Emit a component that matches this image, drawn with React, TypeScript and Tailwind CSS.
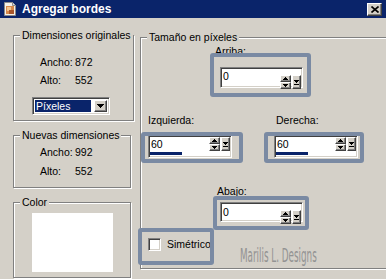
import React from "react";

const raised =
  "bg-[#d4d0c8] border border-t-white border-l-white border-b-[#404040] border-r-[#404040] shadow-[inset_-1px_-1px_0_#808080]";
const sunken =
  "border border-t-[#808080] border-l-[#808080] border-b-white border-r-white shadow-[inset_1px_1px_0_#404040,inset_-1px_-1px_0_#d4d0c8]";

function Arrow({ dir }: { dir: "up" | "down" }) {
  return (
    <svg width="5" height="3" viewBox="0 0 5 3" className="block" shapeRendering="crispEdges">
      {dir === "up" ? (
        <>
          <rect x="2" y="0" width="1" height="1" fill="#000" />
          <rect x="1" y="1" width="3" height="1" fill="#000" />
          <rect x="0" y="2" width="5" height="1" fill="#000" />
        </>
      ) : (
        <>
          <rect x="0" y="0" width="5" height="1" fill="#000" />
          <rect x="1" y="1" width="3" height="1" fill="#000" />
          <rect x="2" y="2" width="1" height="1" fill="#000" />
        </>
      )}
    </svg>
  );
}

function SpinButtons({ className }: { className: string }) {
  return (
    <div className={`flex gap-[1px] ${className}`}>
      <div className="flex flex-col">
        <div className={`${raised} w-[11px] h-[7px] flex items-center justify-center`}>
          <Arrow dir="up" />
        </div>
        <div className={`${raised} w-[11px] h-[7px] flex items-center justify-center`}>
          <Arrow dir="down" />
        </div>
      </div>
      <div className={`${raised} w-[9px] h-[14px] flex flex-col items-center justify-center gap-[1px]`}>
        <Arrow dir="down" />
        <div className="w-[5px] h-px bg-black" />
      </div>
    </div>
  );
}

function Spin({
  size,
  value,
  bar,
  btn,
  textPad,
  highlight,
}: {
  size: string;
  value: string;
  bar: number;
  btn: string;
  textPad: string;
  highlight: string;
}) {
  return (
    <div className={`relative ${size}`}>
      <div className={`w-full h-full bg-white ${sunken} flex flex-col`}>
        <div className="flex items-start">
          <div className={`flex-1 pl-[2px] leading-[13px] ${textPad}`}>{value}</div>
          <SpinButtons className={btn} />
        </div>
        <div className="mt-auto mb-[2px] ml-[1px] h-[3px] bg-[#0a246a]" style={{ width: bar }} />
      </div>
      <div className={`absolute pointer-events-none border-[4px] border-[#7a8aa3] rounded-[3px] ${highlight}`} />
    </div>
  );
}

function Group({
  title,
  className,
  children,
}: {
  title: string;
  className: string;
  children?: React.ReactNode;
}) {
  return (
    <fieldset
      className={`border border-[#808080] shadow-[inset_1px_1px_0_#fff,1px_1px_0_#fff] ${className}`}
    >
      <legend className="ml-[6px] px-[2px] leading-[13px] bg-[#d4d0c8] whitespace-nowrap">{title}</legend>
      {children}
    </fieldset>
  );
}

function Row({ label, value, h }: { label: string; value: string; h: string }) {
  return (
    <div className={`flex items-center ${h}`}>
      <span className="w-[35px] whitespace-nowrap">{label}</span>
      <span>{value}</span>
    </div>
  );
}

export default function App() {
  return (
    <div className="w-[386px] h-[279px] bg-[#d4d0c8] overflow-hidden flex flex-col font-['Liberation_Sans',Arial,sans-serif] text-[10.5px] leading-[13px] text-black">
      {/* Title bar */}
      <div className="h-[18px] bg-[#0a246a] flex items-center shrink-0">
        <svg width="14" height="14" viewBox="0 0 14 14" className="ml-[3px] shrink-0">
          <path d="M1.5 0.5 H9.5 L12.5 3.5 V13.5 H1.5 Z" fill="#f4f1ea" stroke="#8a8a8a" />
          <path d="M9.5 0.5 V3.5 H12.5" fill="#dcdcdc" stroke="#8a8a8a" />
          <rect x="3" y="4" width="8" height="8" fill="#d88a4c" />
          <rect x="4" y="5" width="4" height="4" fill="#f1c38e" />
          <rect x="6" y="8" width="5" height="4" fill="#a8552a" />
        </svg>
        <span className="ml-[5px] text-white font-bold text-[12px] leading-[14px] whitespace-nowrap">
          Agregar bordes
        </span>
        <div className={`ml-auto mr-[4px] w-[15px] h-[13px] ${raised} flex items-center justify-center`}>
          <svg width="8" height="7" viewBox="0 0 8 7">
            <path d="M0.5 0.5 L7.5 6.5 M7.5 0.5 L0.5 6.5" stroke="#000" strokeWidth="1.6" />
          </svg>
        </div>
      </div>

      {/* Body */}
      <div className="flex items-start flex-1">
        {/* Left column */}
        <div className="ml-[13px] mt-[11px] w-[118px] flex flex-col">
          <Group title="Dimensiones originales" className="h-[92px]">
            <div className="pt-[11px] pl-[26px]">
              <Row label="Ancho:" value="872" h="h-[18px]" />
              <Row label="Alto:" value="552" h="h-[18px]" />
            </div>
            <div
              className={`ml-[18px] mt-[8px] w-[78px] h-[18px] bg-white ${sunken} flex items-stretch p-[2px]`}
            >
              <div className="flex-1 mr-[3px] bg-[#0a246a] text-white pl-[1px] leading-[12px] flex items-center">
                Píxeles
              </div>
              <div className={`${raised} w-[13px] flex items-center justify-center`}>
                <svg width="7" height="4" viewBox="0 0 7 4" shapeRendering="crispEdges">
                  <rect x="0" y="0" width="7" height="1" fill="#000" />
                  <rect x="1" y="1" width="5" height="1" fill="#000" />
                  <rect x="2" y="2" width="3" height="1" fill="#000" />
                  <rect x="3" y="3" width="1" height="1" fill="#000" />
                </svg>
              </div>
            </div>
          </Group>

          <Group title="Nuevas dimensiones" className="mt-[8px] h-[59px]">
            <div className="pt-[1px] pl-[26px]">
              <Row label="Ancho:" value="992" h="h-[19px]" />
              <Row label="Alto:" value="552" h="h-[19px]" />
            </div>
          </Group>

          <Group title="Color" className="mt-[8px] h-[82px]">
            <div className="ml-[18px] mt-[4px] w-[81px] h-[59px] bg-white" />
          </Group>
        </div>

        {/* Right group */}
        <Group title="Tamaño en píxeles" className="ml-[9px] mt-[13px] w-[237px] h-[238px]">
          {/* Arriba */}
          <div className="ml-[74px] mt-[1px] flex flex-col items-start">
            <span>Arriba:</span>
            <div className="ml-[5px] mt-[9px]">
              <Spin
                size="w-[83px] h-[21px]"
                value="0"
                bar={0}
                btn="mt-[7px] mr-[1px]"
                textPad="pt-[2px]"
                highlight="left-[-10px] top-[-14px] right-[-8px] bottom-[-9px]"
              />
            </div>
          </div>

          {/* Izquierda / Derecha */}
          <div className="flex mt-[26px]">
            <div className="ml-[7px] flex flex-col items-start">
              <span>Izquierda:</span>
              <div className="mt-[8px]">
                <Spin
                  size="w-[84px] h-[23px]"
                  value="60"
                  bar={32}
                  btn="mt-[1px] mr-[1px]"
                  textPad="pt-[2px]"
                  highlight="left-[-7px] top-[-3px] right-[-11px] bottom-[-5px]"
                />
              </div>
            </div>
            <div className="ml-[42px] flex flex-col items-start">
              <span className="ml-[2px]">Derecha:</span>
              <div className="mt-[8px]">
                <Spin
                  size="w-[84px] h-[23px]"
                  value="60"
                  bar={32}
                  btn="mt-[1px] mr-[1px]"
                  textPad="pt-[2px]"
                  highlight="left-[-10px] top-[-3px] right-[-6px] bottom-[-5px]"
                />
              </div>
            </div>
          </div>

          {/* Abajo */}
          <div className="ml-[76px] mt-[27px] flex flex-col items-start">
            <span>Abajo:</span>
            <div className="ml-[3px] mt-[4px]">
              <Spin
                size="w-[83px] h-[20px]"
                value="0"
                bar={0}
                btn="mt-[7px] mr-[1px]"
                textPad="pt-[3px]"
                highlight="left-[-7px] top-[-6px] right-[-6px] bottom-[-8px]"
              />
            </div>
          </div>

          {/* Simétrico + watermark */}
          <div className="flex items-start mt-[16px] ml-[7px]">
            <div className="relative w-[13px] h-[13px] shrink-0">
              <div className={`w-full h-full bg-white ${sunken}`} />
              <div className="absolute pointer-events-none border-[4px] border-[#7a8aa3] rounded-[3px] left-[-10px] top-[-10px] right-[-53px] bottom-[-14px]" />
            </div>
            <span className="ml-[6px] w-[67px] leading-[13px] whitespace-nowrap">Simétrico</span>
            <span className="ml-[6px] mt-[7px] shrink-0 inline-block origin-left scale-x-[0.44] text-[20px] leading-[20px] text-[#939393] font-['DejaVu_Sans',sans-serif] whitespace-nowrap">
              Marilis L. Designs
            </span>
          </div>
        </Group>
      </div>
    </div>
  );
}
